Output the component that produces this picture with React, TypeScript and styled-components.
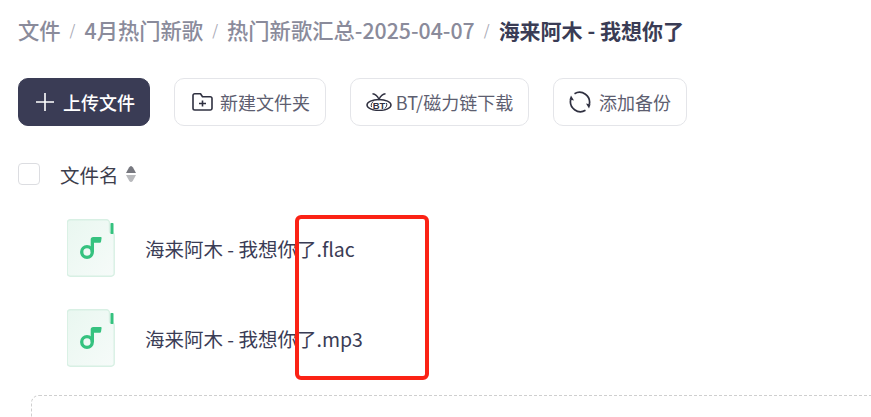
import React from "react";
import styled, { createGlobalStyle } from "styled-components";

const Global = createGlobalStyle`
  html, body { margin: 0; padding: 0; background: #fff; overflow: hidden; }
  body { font-family: "Noto Sans CJK SC", "Noto Sans", sans-serif; }
`;

const Page = styled.div`
  position: relative;
  width: 871px;
  height: 417px;
  overflow: hidden;
  padding: 15px 0 0 18px;
  box-sizing: border-box;
`;

const Breadcrumb = styled.nav`
  display: flex;
  align-items: center;
  height: 30px;
  font-size: 21.3px;
  line-height: 30px;
  font-weight: 500;
  color: #8a8b9b;
`;

const Sep = styled.span`
  margin: 0 9px;
  font-size: 15px;
  font-weight: 400;
  color: #a9aab6;
`;

const Current = styled.span`
  color: #3a3c55;
  font-weight: 700;
  font-size: 21px;
`;

const Toolbar = styled.div`
  display: flex;
  gap: 24px;
  margin-top: 33px;
`;

const Button = styled.button<{ $w: number; $gap: number; $inset?: number; $primary?: boolean }>`
  display: flex;
  align-items: center;
  justify-content: center;
  gap: ${(p) => p.$gap}px;
  width: ${(p) => p.$w}px;
  height: 48px;
  padding: 0 0 0 ${(p) => p.$inset ?? 0}px;
  box-sizing: border-box;
  border-radius: 10px;
  border: 1px solid ${(p) => (p.$primary ? "#3a3c55" : "#e4e5e9")};
  background: ${(p) => (p.$primary ? "#3a3c55" : "#fff")};
  color: ${(p) => (p.$primary ? "#fff" : "#5d5e70")};
  font-family: inherit;
  font-size: 18px;
  font-weight: ${(p) => (p.$primary ? 500 : 400)};
  white-space: nowrap;
`;

const HeaderRow = styled.div`
  display: flex;
  align-items: center;
  height: 22px;
  margin-top: 37px;
`;

const Checkbox = styled.span`
  width: 22px;
  height: 22px;
  box-sizing: border-box;
  border: 1px solid #dcdde1;
  border-radius: 4px;
  background: #fff;
`;

const ColumnName = styled.span`
  margin-left: 20px;
  font-size: 19.5px;
  color: #3d3e4c;
`;

const SortIcon = styled.svg`
  margin-left: 7px;
  display: block;
`;

const FileList = styled.div`
  display: flex;
  flex-direction: column;
  gap: 32px;
  margin: 34px 0 0 49px;
`;

const FileRow = styled.div`
  display: flex;
  align-items: center;
  gap: 30px;
  height: 58px;
`;

const FileName = styled.span`
  font-size: 19.5px;
  color: #3a3c55;
`;

const DropZone = styled.div`
  width: 900px;
  height: 120px;
  margin: 28px 0 0 13px;
  box-sizing: border-box;
  border: 1px dashed #cfcfcf;
  border-radius: 8px;
`;

const Annotation = styled.div`
  position: absolute;
  left: 295px;
  top: 215px;
  width: 134px;
  height: 165px;
  box-sizing: border-box;
  border: 4.5px solid #fb2215;
  border-radius: 6px;
`;

const FolderIcon = () => (
  <svg width="21" height="18" viewBox="0 0 21 18" fill="none" stroke="#2f3040" strokeWidth="1.6" strokeLinejoin="round">
    <path d="M1 2.500a1.700 1.700 0 0 1 1.700-1.700h5.800l2 3h7.800a1.700 1.700 0 0 1 1.700 1.700v9.800a1.700 1.700 0 0 1-1.700 1.700H2.700A1.700 1.700 0 0 1 1 15.300z" />
    <path d="M7 10.500h7M10.500 7.500v6" />
  </svg>
);

const BtIcon = () => (
  <svg width="26" height="18" viewBox="0 0 26 18" fill="none" stroke="#2f3040" strokeWidth="1.500">
    <ellipse cx="13" cy="12" rx="12" ry="5.400" />
    <path d="M6.500 .8c2.500.2 4.800 1.800 6.500 5.500 1.700-3.700 4-5.300 6.500-5.500" strokeWidth="1.400" />
    <path d="M5.500 14c-.8-2.400.2-4.400 1.800-5.300M20.500 10c.8 2.400-.2 4.400-1.800 5.300" strokeWidth="1" />
    <text x="13" y="15.500" textAnchor="middle" fontSize="9.500" fontWeight="700" fill="#2f3040" stroke="none" fontFamily="Liberation Sans, sans-serif">BT</text>
  </svg>
);

const BackupIcon = () => (
  <svg width="22" height="22" viewBox="0 0 22 22" fill="none" stroke="#2f3040" strokeWidth="1.700">
    <path d="M5.500 2.700A10 10 0 0 1 20.300 13.500" />
    <path d="M17 12.500l4.500 1-1.500 4z" fill="#2f3040" stroke="none" />
    <path d="M16.500 19.300A10 10 0 0 1 1.700 8.500" />
    <path d="M5 9.500l-4.500-1 1.500-4z" fill="#2f3040" stroke="none" />
  </svg>
);

const MusicFile = () => (
  <svg width="48" height="58" viewBox="0 0 48 58">
    <defs>
      <linearGradient id="musicFill" x1="0" y1="0" x2="1" y2="1">
        <stop offset="0" stopColor="#e9f7f0" />
        <stop offset="1" stopColor="#f6fbf9" />
      </linearGradient>
    </defs>
    <path
      d="M3.500.800h36a3 3 0 0 1 3 3V12a2 2 0 0 0 2 2h.500a2.200 2.200 0 0 1 2.200 2.200v38a3 3 0 0 1-3 3h-41a3 3 0 0 1-3-3V3.800a3 3 0 0 1 3-3z"
      fill="url(#musicFill)"
      stroke="#d8f0e4"
      strokeWidth="1.400"
    />
    <rect x="43.500" y="4" width="3" height="11" rx="0.800" fill="#35c27f" />
    <circle cx="20" cy="33" r="5.300" fill="none" stroke="#35c27f" strokeWidth="3.300" />
    <path d="M23.700 33V20.500a2.500 2.500 0 0 1 2.500-2.500h7.600a.8.8 0 0 1 .8.900l-.5 3.400a1.500 1.500 0 0 1-1.500 1.500H27V33z" fill="#35c27f" />
  </svg>
);

export default function App() {
  return (
    <Page>
      <Global />
      <Breadcrumb>
        <span>文件</span>
        <Sep>/</Sep>
        <span>4月热门新歌</span>
        <Sep>/</Sep>
        <span>热门新歌汇总-2025-04-07</span>
        <Sep>/</Sep>
        <Current>海来阿木 - 我想你了</Current>
      </Breadcrumb>
      <Toolbar>
        <Button $w={132} $gap={9} $inset={3} $primary>
          <svg width="18" height="18" viewBox="0 0 18 18" stroke="#fff" strokeWidth="1.6">
            <path d="M9 0v18M0 9h18" />
          </svg>
          上传文件
        </Button>
        <Button $w={152} $gap={7} $inset={2}>
          <FolderIcon />
          新建文件夹
        </Button>
        <Button $w={179} $gap={4}>
          <BtIcon />
          BT/磁力链下载
        </Button>
        <Button $w={134} $gap={8}>
          <BackupIcon />
          添加备份
        </Button>
      </Toolbar>
      <HeaderRow>
        <Checkbox />
        <ColumnName>文件名</ColumnName>
        <SortIcon width="10" height="16" viewBox="0 0 10 16">
          <path d="M5 0q1 0 2 1.500l3 5.500H0l3-5.500Q4 0 5 0z" fill="#77787f" />
          <path d="M5 16q1 0 2-1.500l3-5.500H0l3 5.500Q4 16 5 16z" fill="#b9babd" />
        </SortIcon>
      </HeaderRow>
      <FileList>
        <FileRow>
          <MusicFile />
          <FileName>海来阿木 - 我想你了.flac</FileName>
        </FileRow>
        <FileRow>
          <MusicFile />
          <FileName>海来阿木 - 我想你了.mp3</FileName>
        </FileRow>
      </FileList>
      <DropZone />
      <Annotation />
    </Page>
  );
}
